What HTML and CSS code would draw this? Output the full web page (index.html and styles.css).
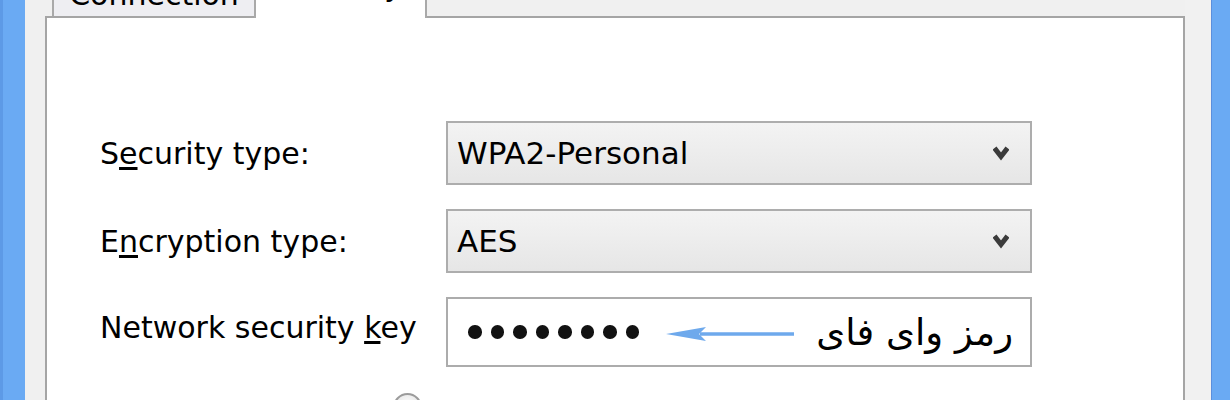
FILE: index.html
```html
<!DOCTYPE html>
<html lang="en">
<head>
<meta charset="utf-8">
<title>Wireless Network Properties - Security</title>
<link rel="stylesheet" href="styles.css">
</head>
<body>
<div class="window">
  <div class="edge edge-left"></div>
  <div class="gutter gutter-left"></div>
  <div class="dialog">
    <div class="tabs">
      <div class="tab"><span class="tab-label">Connection</span></div>
      <div class="tab tab-active"><span class="tab-label">Security</span></div>
    </div>
    <div class="panel">
      <div class="form">
        <label class="field-label">S<u>e</u>curity type:</label>
        <div class="combo">
          <span class="combo-value">WPA2-Personal</span>
          <svg class="chevron" width="16" height="18" viewBox="0 0 16 18" aria-hidden="true"><polyline points="1.5,4 8,12.5 14.5,4" fill="none" stroke="#3b3b3b" stroke-width="5" stroke-linejoin="miter"/></svg>
        </div>

        <label class="field-label">E<u>n</u>cryption type:</label>
        <div class="combo">
          <span class="combo-value">AES</span>
          <svg class="chevron" width="16" height="18" viewBox="0 0 16 18" aria-hidden="true"><polyline points="1.5,4 8,12.5 14.5,4" fill="none" stroke="#3b3b3b" stroke-width="5" stroke-linejoin="miter"/></svg>
        </div>

        <label class="field-label field-label-key">Network security <u>k</u>ey</label>
        <div class="textbox">
          <div class="dots">
            <span class="dot"></span><span class="dot"></span><span class="dot"></span><span class="dot"></span>
            <span class="dot"></span><span class="dot"></span><span class="dot"></span><span class="dot"></span>
          </div>
          <svg class="arrow" width="130" height="16" viewBox="0 0 130 16" aria-hidden="true">
            <line x1="34" y1="8" x2="128" y2="8" stroke="#6ea9ec" stroke-width="3.5"/>
            <polygon points="0,8 40,1 33,8 40,15" fill="#6ea9ec"/>
          </svg>
          <span class="note" dir="rtl" lang="fa">رمز وای فای</span>
        </div>
      </div>
      <div class="peek"></div>
    </div>
  </div>
  <div class="gutter gutter-right"></div>
  <div class="edge edge-right"></div>
</div>
</body>
</html>
```
FILE: styles.css
```css
html, body {
  margin: 0;
  padding: 0;
  background: #f0f0f0;
}

body {
  width: 1230px;
  height: 400px;
  overflow: hidden;
  font-family: "DejaVu Sans", "Liberation Sans", sans-serif;
  color: #000;
}

.window {
  display: flex;
  height: 400px;
  overflow: hidden;
  background: #f0f0f0;
}

.edge {
  flex: none;
  background: #6aaaf3;
}

.edge-left {
  width: 25px;
  box-sizing: border-box;
  border-left: 3px solid #5d9ae6;
}

.edge-right {
  width: 19px;
  box-sizing: border-box;
  border-left: 1px solid #5b8fdc;
}

.gutter {
  flex: none;
  background: #f0f0f0;
}

.gutter-left {
  width: 20px;
}

.gutter-right {
  width: 26px;
  background: #f1f1f1;
}

.dialog {
  flex: none;
  width: 1140px;
  display: flex;
  flex-direction: column;
}

.tabs {
  height: 16px;
  flex: none;
  display: flex;
  padding-left: 7px;
}

.tab {
  box-sizing: border-box;
  width: 204px;
  height: 16px;
  background: #eeeef2;
  border-left: 2px solid #a9a9a9;
  border-right: 2px solid #a9a9a9;
  overflow: hidden;
  display: flex;
  justify-content: center;
  align-items: flex-end;
}

.tab-label {
  font-size: 30px;
  line-height: 30px;
  margin-bottom: 6px;
  white-space: nowrap;
}

.tab-active {
  position: relative;
  z-index: 1;
  width: 173px;
  height: 18px;
  margin-left: -2px;
  margin-bottom: -2px;
  background: #fff;
}

.tab-active .tab-label {
  margin-bottom: 17px;
  color: #000;
}

.panel {
  flex: 1;
  background: #fff;
  border: 2px solid #a5a5a5;
  border-bottom: none;
  padding: 103px 0 0 53px;
}

.form {
  display: grid;
  grid-template-columns: 346px 586px;
  grid-template-rows: 64px 64px 70px;
  row-gap: 24px;
  align-items: center;
}

.field-label {
  font-size: 30px;
  white-space: nowrap;
}

.field-label u {
  text-underline-offset: 3px;
}

.field-label-key {
  margin-bottom: 10px;
}

.combo {
  box-sizing: border-box;
  height: 100%;
  border: 2px solid #adadad;
  background: linear-gradient(#f3f3f3, #e6e6e6);
  display: flex;
  align-items: center;
  justify-content: space-between;
  padding: 0 21px 0 9px;
}

.combo-value {
  font-size: 31px;
  white-space: nowrap;
}

.chevron {
  flex: none;
}

.textbox {
  box-sizing: border-box;
  height: 100%;
  border: 2px solid #acacac;
  background: #fff;
  display: flex;
  align-items: center;
  padding: 0 17px 0 20px;
}

.dots {
  display: flex;
  gap: 9px;
}

.dot {
  width: 13.5px;
  height: 13.5px;
  border-radius: 50%;
  background: #121212;
}

.arrow {
  flex: none;
  margin-left: 27px;
  margin-top: 4px;
}

.note {
  margin-left: auto;
  font-size: 37px;
  white-space: nowrap;
}

.peek {
  margin-top: 26px;
  margin-left: 293px;
  width: 29px;
  height: 29px;
  box-sizing: border-box;
  border-radius: 50%;
  border: 2px solid #9c9c9c;
  background: radial-gradient(circle at 50% 40%, #ffffff, #dcdcdc);
}
```
